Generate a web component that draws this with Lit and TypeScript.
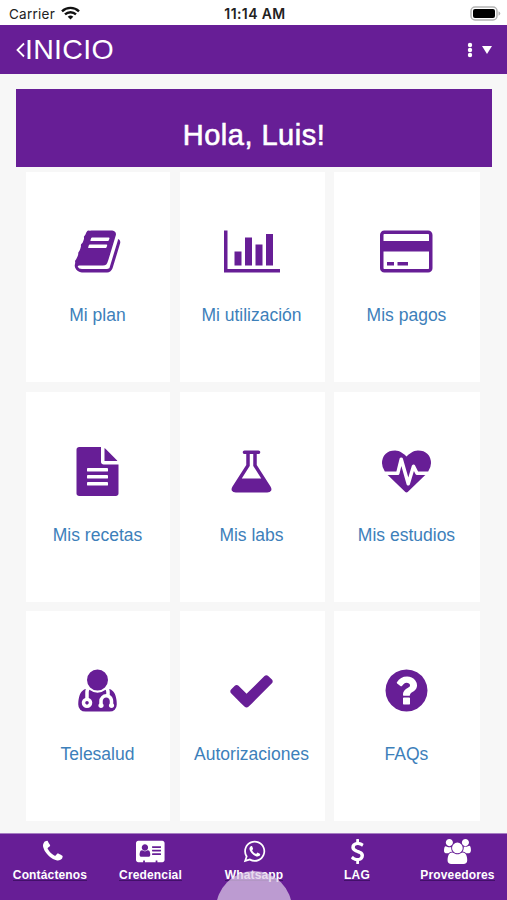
import { LitElement, html, css, svg } from "lit";
import { customElement, property } from "lit/decorators.js";

interface Glyph {
  w: number;
  d: string;
}

const GLYPHS: Record<string, Glyph> = {
  book: { w: 1792, d: "M1703 478q40 57 18 129l-275 906q-19 64-76.500 107.500t-122.500 43.500h-923q-77 0-148.500-53.500t-99.500-131.500q-24-67-2-127 0-4 3-27t4-37q1-8-3-21.500t-3-19.500q2-11 8-21t16.500-23.500 16.500-23.500q23-38 45-91.500t30-91.500q3-10 .5-30t-.5-28q3-11 17-28t17-23q21-36 42-92t25-90q1-9-2.500-32t.5-28q4-13 22-30.500t22-22.500q19-26 42.500-84.500t27.500-96.500q1-8-3-25.500t-2-26.500q2-8 9-18t18-23 17-21q8-12 16.500-30.500t15-35 16-36 19.500-32 26.500-23.500 36-11.500 47.500 5.500l-1 3q38-9 51-9h761q74 0 114 56t18 130l-274 906q-36 119-71.500 153.500t-128.500 34.500h-869q-27 0-38 15-11 16-1 43 24 70 144 70h923q29 0 56-15.500t35-41.500l300-987q7-22 5-57 38 15 59 43zm-1064 2q-4 13 2 22.500t20 9.500h608q13 0 25.500-9.500t16.500-22.500l21-64q4-13-2-22.500t-20-9.500h-608q-13 0-25.500 9.500t-16.500 22.500zm-83 256q-4 13 2 22.500t20 9.500h608q13 0 25.500-9.500t16.500-22.500l21-64q4-13-2-22.500t-20-9.500h-608q-13 0-25.500 9.500t-16.500 22.500z" },
  chart: { w: 2048, d: "M640 896v512h-256v-512h256zm384-512v1024h-256v-1024h256zm1024 1152v128h-2048v-1536h128v1408h1920zm-640-896v768h-256v-768h256zm384-384v1152h-256v-1152h256z" },
  card: { w: 1920, d: "M1760 128h-1600q-66 0-113 47t-47 113v1216q0 66 47 113t113 47h1600q66 0 113-47t47-113v-1216q0-66-47-113t-113-47zm-1600 128h1600q13 0 22.500 9.500t9.500 22.500v224h-1664v-224q0-13 9.500-22.500t22.500-9.500zm1600 1280h-1600q-13 0-22.500-9.500t-9.500-22.500v-608h1664v608q0 13-9.500 22.500t-22.500 9.500zm-1504-128v-128h256v128h-256zm384 0v-128h384v128h-384z" },
  file: { w: 1792, d: "M1152 512v-472q22 14 36 28l408 408q14 14 28 36h-472zm-128 32q0 40 28 68t68 28h544v1056q0 40-28 68t-68 28h-1344q-40 0-68-28t-28-68v-1600q0-40 28-68t68-28h800v544zM544 768q-32 0-32 32v64q0 32 32 32h704q32 0 32-32v-64q0-32-32-32zM544 1024q-32 0-32 32v64q0 32 32 32h704q32 0 32-32v-64q0-32-32-32zM544 1280q-32 0-32 32v64q0 32 32 32h704q32 0 32-32v-64q0-32-32-32z" },
  flask: { w: 1792, d: "M1591 1448q56 89 21.500 152.500t-140.500 63.500h-1152q-106 0-140.500-63.500t21.500-152.500l503-793v-399h-64q-26 0-45-19t-19-45 19-45 45-19h512q26 0 45 19t19 45-19 45-45 19h-64v399zm-779-725l-272 429h712l-272-429-20-31v-436h-128v436z" },
  heart: { w: 1792, d: "M1280 1024h305q-5 6-10 10.500t-9 7.500l-3 4-623 600q-18 18-44 18t-44-18l-624-602q-5-2-21-20h369q22 0 39.500-13.500t22.500-34.500l70-281 190 667q6 20 23 33t39 13q21 0 38-13t23-33l146-485 56 112q18 35 57 35zm512-428q0 145-103 300h-369l-111-221q-8-17-25.500-27t-36.500-8q-45 5-56 46l-129 430-196-686q-6-20-23.500-33t-39.500-13-39 13.500-22 34.500l-116 464h-423q-103-155-103-300 0-220 127-344t351-124q62 0 126.500 21.500t120 58 95.500 68.500 76 68q36-36 76-68t95.500-68.500 120-58 126.500-21.500q224 0 351 124t127 344z" },
  doctor: { w: 1792, d: "M576 1344q0 26-19 45t-45 19-45-19-19-45 19-45 45-19 45 19 19 45zm1024 64q0 121-73 188.500t-194 67.500h-874q-121 0-194-67.500t-73-188.500q0-68 5.500-131t24-138 47.500-132.500 81-103 120-60.500q-22 52-22 120v203q-58 20-93 70t-35 111q0 80 56 136t136 56 136-56 56-136q0-61-35.500-111t-92.500-70v-203q0-62 25-93 132 104 295 104t295-104q25 31 25 93v64q-106 0-181 75t-75 181v89q-32 29-32 71 0 40 28 68t68 28 68-28 28-68q0-42-32-71v-89q0-52 38-90t90-38 90 38 38 90v89q-32 29-32 71 0 40 28 68t68 28 68-28 28-68q0-42-32-71v-89q0-68-34.500-127.500t-93.500-93.500q0-10 .5-42.500t0-48-2.500-41.500-7-47-13-40q68 15 120 60.500t81 103 47.500 132.500 24 138 5.500 131zm-320-896q0 159-112.500 271.500t-271.500 112.500-271.500-112.500-112.500-271.500 112.500-271.500 271.500-112.500 271.500 112.500 112.500 271.500z" },
  check: { w: 1792, d: "M1671 566q0 40-28 68l-724 724-136 136q-28 28-68 28t-68-28l-136-136-362-362q-28-28-28-68t28-68l136-136q28-28 68-28t68 28l294 295 656-657q28-28 68-28t68 28l136 136q28 28 28 68z" },
  question: { w: 1792, d: "M1024 1376v-192q0-14-9-23t-23-9h-192q-14 0-23 9t-9 23v192q0 14 9 23t23 9h192q14 0 23-9t9-23zm256-672q0-88-55.500-163t-138.500-116-170-41q-243 0-371 213-15 24 8 42l132 100q7 6 19 6 16 0 25-12 53-68 86-92 34-24 86-24 48 0 85.500 26t37.500 59q0 38-20 61t-68 45q-63 28-115.500 86.500t-52.500 125.500v36q0 14 9 23t23 9h192q14 0 23-9t9-23q0-19 21.500-49.500t54.500-49.500q32-18 49-28.500t46-35 44.500-48 28-60.500 12.500-81zm384 192q0 209-103 385.500t-279.500 279.500-385.500 103-385.500-103-279.500-279.500-103-385.500 103-385.500 279.500-279.500 385.500-103 385.500 103 279.500 279.500 103 385.500z" },
  phone: { w: 1408, d: "M1408 1240q0 27-10 70.500t-21 68.500q-21 50-122 106-94 51-186 51-27 0-53-3.500t-57.500-12.500-47-14.500-55.500-20.500-49-18q-98-35-175-83-127-79-264-216t-216-264q-48-77-83-175-3-9-18-49t-20.500-55.500-14.500-47-12.500-57.500-3.500-53q0-92 51-186 56-101 106-122 25-11 68.500-21t70.500-10q14 0 21 3 18 6 53 76 11 19 30 54t35 63.500 31 53.500q3 4 17.500 25t21.500 35.500 7 28.500q0 20-28.500 50t-62 55-62 53-28.500 46q0 9 5 22.500t8.500 20.500 14 24 11.500 19q76 137 174 235t235 174q2 1 19 11.500t24 14 20.500 8.500 22.500 5q18 0 46-28.500t53-62 55-62 50-28.500q14 0 28.500 7t35.500 21.500 25 17.500q25 15 53.500 31t63.500 35 54 30q70 35 76 53 3 7 3 21z" },
  badge: { w: 2048, d: "M1024 1131q0-64-9-117.500t-29.500-103-60.500-78-97-28.500q-6 4-30 18t-37.500 21.500-35.500 17.500-43 14.500-42 4.500-42-4.500-43-14.500-35.500-17.500-37.500-21.500-30-18q-57 0-97 28.500t-60.500 78-29.500 103-9 117.500 37 106.500 91 42.500h512q54 0 91-42.500t37-106.500zm-157-520q0-94-66.500-160.500t-160.500-66.500-160.500 66.500-66.500 160.500 66.500 160.500 160.500 66.500 160.500-66.500 66.500-160.500zm925 509v-64q0-14-9-23t-23-9h-576q-14 0-23 9t-9 23v64q0 14 9 23t23 9h576q14 0 23-9t9-23zm0-260v-56q0-15-10.500-25.500t-25.500-10.500h-568q-15 0-25.500 10.500t-10.500 25.500v56q0 15 10.500 25.500t25.500 10.500h568q15 0 25.500-10.500t10.500-25.500zm0-252v-64q0-14-9-23t-23-9h-576q-14 0-23 9t-9 23v64q0 14 9 23t23 9h576q14 0 23-9t9-23zm256-320v1216q0 66-47 113t-113 47h-352v-96q0-14-9-23t-23-9h-64q-14 0-23 9t-9 23v96h-768v-96q0-14-9-23t-23-9h-64q-14 0-23 9t-9 23v96h-352q-66 0-113-47t-47-113v-1216q0-66 47-113t113-47h1728q66 0 113 47t47 113z" },
  whatsapp: { w: 1792, d: "M1113 974q13 0 97.500 44t89.500 53q2 5 2 15 0 33-17 76-16 39-71 65.500t-102 26.500q-57 0-190-62-98-45-170-118t-148-185q-72-107-71-194v-8q3-91 74-158 24-22 52-22 6 0 18 1.500t19 1.500q19 0 26.500 6.500t15.500 27.500q8 20 33 88t25 75q0 21-34.500 57.500t-34.500 46.500q0 7 5 15 34 73 102 137 56 53 151 101 12 7 22 7 15 0 54-48.500t52-48.500zm-203 530q127 0 243.500-50t200.500-134 134-200.500 50-243.500-50-243.500-134-200.500-200.500-134-243.500-50-243.500 50-200.500 134-134 200.500-50 243.500q0 203 120 368l-79 233 242-77q158 104 345 104zm0-1382q153 0 292.500 60t240.500 161 161 240.500 60 292.500-60 292.500-161 240.500-240.500 161-292.500 60q-195 0-365-94l-417 134 136-405q-108-178-108-389 0-153 60-292.500t161-240.500 240.500-161 292.500-60z" },
  dollar: { w: 1792, d: "M1362 1185q0 153-99.500 263.500t-258.500 136.500v175q0 14-9 23t-23 9h-135q-13 0-22.500-9.500t-9.500-22.500v-175q-66-9-127.500-31t-101.500-44.500-74-48-46.500-37.500-17.500-18q-17-21-2-41l103-135q7-10 23-12 15-2 24 9l2 2q113 99 243 125 37 8 74 8 81 0 142.500-43t61.500-122q0-28-15-53t-33.500-42-58.500-37.500-66-32-80-32.500q-39-16-61.500-25t-61.500-26.500-62.500-31-56.500-35.500-53.500-42.500-43.500-49-35.500-58-21-66.500-8.500-78q0-138 98-242t255-134v-180q0-13 9.500-22.500t22.500-9.500h135q14 0 23 9t9 23v176q57 6 110.500 23t87 33.500 63.500 37.500 39 29 15 14q17 18 5 38l-81 146q-8 15-23 16-14 3-27-7-3-3-14.500-12t-39-26.500-58.500-32-74.500-26-85.500-11.500q-95 0-155 43t-60 111q0 26 8.500 48t29.500 41.500 39.500 33 56 31 60.500 27 70 27.500q53 20 81 31.500t76 35 75.500 42.500 62 50 53 63.500 31.500 76.500 13 94z" },
  users: { w: 1920, d: "M593 896q-162 5-265 128h-134q-82 0-138-40.500t-56-118.500q0-353 124-353 6 0 43.500 21t97.500 42.500 119 21.500q67 0 133-23-5 37-5 66 0 159 93 292zm1071 637q0 120-73 189.500t-194 69.500h-874q-121 0-194-69.500t-73-189.500q0-53 3.500-103.500t14-109 26.500-108.500 43-97.500 62-81 85.500-53.500 111.500-20q10 0 43 21.500t73 48 107 48 135 21.500 135-21.500 107-48 73-48 43-21.500q61 0 111.500 20t85.500 53.500 62 81 43 97.500 26.500 108.500 14 109 3.500 103.500zm-1024-1277q0 106-75 181t-181 75-181-75-75-181 75-181 181-75 181 75 75 181zm704 384q0 159-112.500 271.500t-271.500 112.500-271.500-112.500-112.500-271.500 112.500-271.500 271.500-112.500 271.500 112.500 112.500 271.500zm576 225q0 78-56 118.500t-138 40.500h-134q-103-123-265-128 93-133 93-292 0-29-5-66 66 23 133 23 59 0 119-21.500t97.500-42.500 43.500-21q124 0 124 353zm-128-609q0 106-75 181t-181 75-181-75-75-181 75-181 181-75 181 75 75 181z" },
};

@customElement("app-glyph")
export class AppGlyph extends LitElement {
  @property() name = "";

  static styles = css`
    :host { display: inline-flex; height: 1em; }
    svg { display: block; height: 1em; width: auto; fill: currentColor; overflow: visible; }
  `;

  render() {
    const g = GLYPHS[this.name];
    return html`<svg viewBox="0 0 ${g.w} 1792" fill-rule="evenodd" aria-hidden="true">${svg`<path d=${g.d}></path>`}</svg>`;
  }
}

@customElement("menu-tile")
export class MenuTile extends LitElement {
  @property() icon = "";
  @property() label = "";

  static styles = css`
    :host {
      display: flex; flex-direction: column; align-items: center;
      background: #fff; padding: 55px 1px 0 0; box-sizing: border-box; min-width: 0;
    }
    .icon { font-size: 49px; color: #671e96; }
    .label {
      margin-top: 29px; font-size: 17.5px; line-height: 20px; color: #3d80ba;
      white-space: nowrap; text-decoration: none;
    }
  `;

  render() {
    return html`<app-glyph class="icon" name=${this.icon}></app-glyph><a class="label">${this.label}</a>`;
  }
}

const TILES = [
  ["book", "Mi plan"],
  ["chart", "Mi utilización"],
  ["card", "Mis pagos"],
  ["file", "Mis recetas"],
  ["flask", "Mis labs"],
  ["heart", "Mis estudios"],
  ["doctor", "Telesalud"],
  ["check", "Autorizaciones"],
  ["question", "FAQs"],
];

const TABS = [
  ["phone", "Contáctenos"],
  ["badge", "Credencial"],
  ["whatsapp", "Whatsapp"],
  ["dollar", "LAG"],
  ["users", "Proveedores"],
];

@customElement("app-root")
export class AppRoot extends LitElement {
  static styles = css`
    :host {
      display: flex; flex-direction: column; position: relative; overflow: hidden;
      width: 507px; height: 900px; background: #f7f7f7;
      font-family: "Liberation Sans", Arial, sans-serif;
    }
    .status {
      flex: none; height: 25px; background: #fff; color: #222; box-sizing: border-box;
      display: grid; grid-template-columns: 1fr auto 1fr; align-items: center;
      padding: 3px 6px 0 9px; font: 13.5px/20px Inter, sans-serif;
    }
    .carrier { display: flex; align-items: center; gap: 6px; letter-spacing: 0.25px; }
    .wifi { margin-top: -2px; }
    .clock { font-weight: 600; font-size: 14px; letter-spacing: 0.4px; }
    .battery { justify-self: end; display: block; margin-top: -2px; }
    .nav {
      flex: none; height: 49px; background: #671e96; color: #fff; box-sizing: border-box;
      display: flex; align-items: center; justify-content: space-between; padding: 0 15px 0 16px;
    }
    .back { display: flex; align-items: center; }
    .title { font-size: 28.5px; line-height: 32px; letter-spacing: 0.3px; margin-top: -2px; }
    .more { display: flex; align-items: center; gap: 9px; }
    .more svg, .back svg, .wifi { display: block; }
    .hero {
      flex: none; margin: 15px 15px 0 16px; height: 78px; background: #671e96; color: #fff;
      display: flex; justify-content: center; align-items: center; padding-top: 14px; box-sizing: border-box;
      font-size: 29px; line-height: 34px; letter-spacing: 0.5px; -webkit-text-stroke: 0.6px #fff;
    }
    .grid {
      flex: none; height: 649px; margin: 5px 27px 0 26px; display: grid; gap: 9.5px;
      grid-template-columns: 144px 145px 146px; grid-template-rows: repeat(3, 1fr);
    }
    .tabs {
      flex: 1; margin-top: 12px; background: #671e96; color: #fff; display: grid;
      grid-template-columns: 100px 101px 106px 100px 101px; align-items: start;
      border-top: 1px solid #a67dc2; box-sizing: border-box;
    }
    .tab { display: flex; flex-direction: column; align-items: center; padding-top: 5px; }
    .tab-icon { font-size: 25px; }
    .tab:first-child .tab-icon { margin-left: 6px; }
    .tab-label {
      margin-top: 5px; font-weight: 700; font-size: 12px; line-height: 13px; letter-spacing: 0.15px;
      border-bottom: 1px solid #42106a; height: 11px;
    }
    .touch {
      position: absolute; left: 216px; top: 871px; width: 76px; height: 76px; border-radius: 50%;
      background: rgba(222, 204, 232, 0.72);
    }
  `;

  render() {
    return html`
      <div class="status">
        <div class="carrier">
          <span>Carrier</span>
          <svg class="wifi" width="19" height="14" viewBox="0 0 19 14" fill="none" stroke="#111" stroke-width="2.400">
            <path d="M1 5.300a12.300 12.300 0 0 1 17 0"></path>
            <path d="M4 8.400a8 8 0 0 1 11 0"></path>
            <path d="M6.700 10.700a4.200 4.200 0 0 1 5.600 0L9.500 13.600Z" fill="#111" stroke="none"></path>
          </svg>
        </div>
        <span class="clock">11:14 AM</span>
        <svg class="battery" width="31" height="15" viewBox="0 0 31 15">
          <rect x="1" y="1" width="26" height="13" rx="4" fill="#fff" stroke="#b4b4b4" stroke-width="1.500"></rect>
          <rect x="3" y="3" width="22" height="9" rx="2" fill="#000"></rect>
          <path d="M28.500 5.300q1.800.7 1.800 2.200t-1.800 2.200z" fill="#b4b4b4"></path>
        </svg>
      </div>
      <div class="nav">
        <div class="back">
          <svg width="9" height="16" viewBox="0 0 9 16" fill="none" stroke="#fff" stroke-width="1.800">
            <path d="M8 1.500L1.500 8 8 14.500"></path>
          </svg>
          <span class="title">INICIO</span>
        </div>
        <div class="more">
          <svg width="6" height="16" viewBox="0 0 6 16" fill="#fff">
            <circle cx="3" cy="3" r="2.200"></circle>
            <circle cx="3" cy="8" r="2.200"></circle>
            <circle cx="3" cy="13" r="2.200"></circle>
          </svg>
          <svg width="10" height="8" viewBox="0 0 10 8" fill="#fff"><path d="M0 0h10L5 8z"></path></svg>
        </div>
      </div>
      <div class="hero"><span>Hola, Luis!</span></div>
      <div class="grid">
        ${TILES.map(([icon, label]) => html`<menu-tile icon=${icon} label=${label}></menu-tile>`)}
      </div>
      <div class="tabs">
        ${TABS.map(
          ([icon, label]) => html`
            <div class="tab">
              <app-glyph class="tab-icon" name=${icon}></app-glyph>
              <span class="tab-label">${label}</span>
            </div>
          `,
        )}
      </div>
      <div class="touch"></div>
    `;
  }
}
